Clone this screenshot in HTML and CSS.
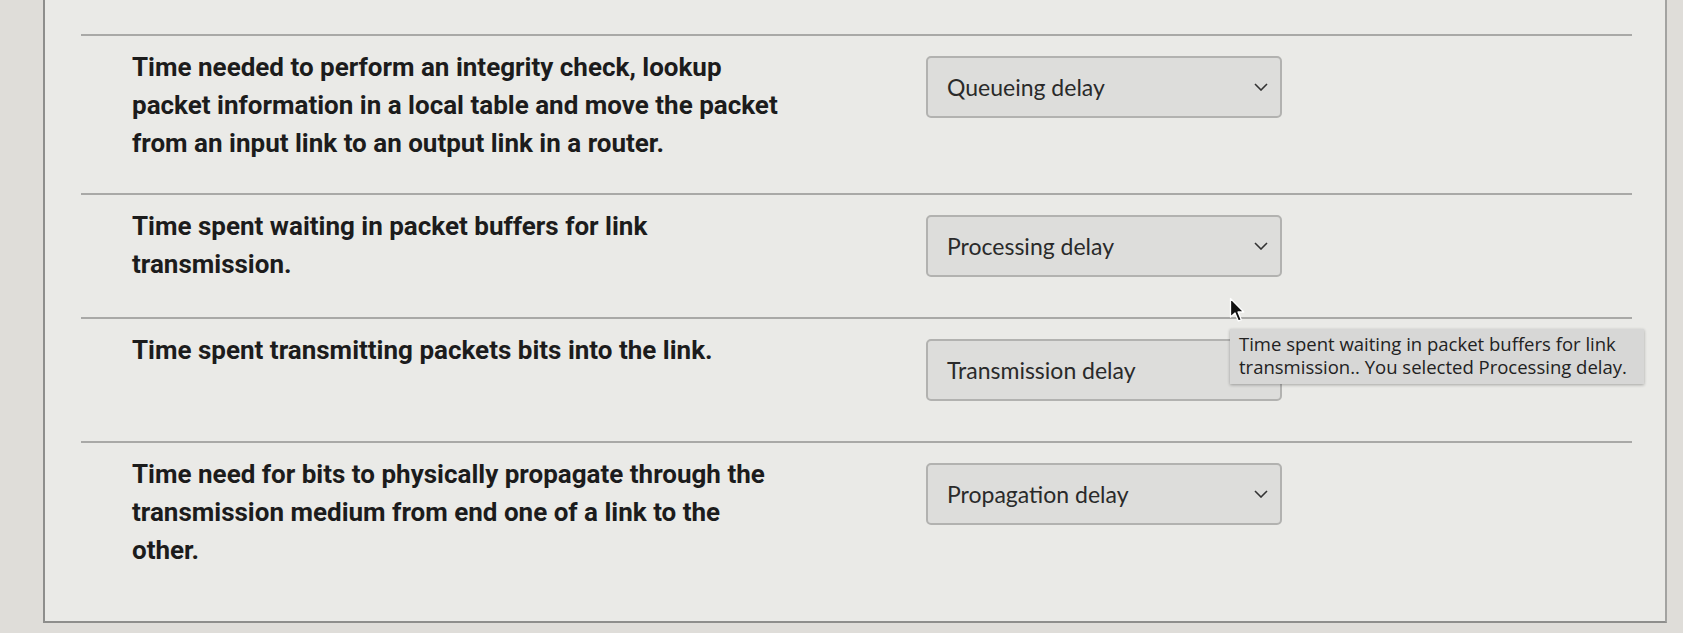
FILE: index.html
```html
<!DOCTYPE html>
<html lang="en">
<head>
<meta charset="utf-8">
<title>Matching question</title>
<link rel="stylesheet" href="styles.css">
</head>
<body>
<div class="panel">
  <div class="rows">
    <div class="row">
      <div class="question">Time needed to perform an integrity check, lookup packet information in a local table and move the packet from an input link to an output link in a router.</div>
      <div class="answer"><div class="select"><span>Queueing delay</span><svg class="chev" viewBox="0 0 14 8" width="14" height="8"><path d="M1 1 L7 7 L13 1" fill="none" stroke="#333" stroke-width="1.6"/></svg></div></div>
    </div>
    <div class="row">
      <div class="question">Time spent waiting in packet buffers for link transmission.</div>
      <div class="answer"><div class="select"><span>Processing delay</span><svg class="chev" viewBox="0 0 14 8" width="14" height="8"><path d="M1 1 L7 7 L13 1" fill="none" stroke="#333" stroke-width="1.6"/></svg></div></div>
    </div>
    <div class="row">
      <div class="question">Time spent transmitting packets bits into the link.</div>
      <div class="answer">
        <div class="select"><span>Transmission delay</span><svg class="chev" viewBox="0 0 14 8" width="14" height="8"><path d="M1 1 L7 7 L13 1" fill="none" stroke="#333" stroke-width="1.6"/></svg></div>
        <div class="tooltip">Time spent waiting in packet buffers for link<br>transmission.. You selected Processing delay.</div>
        <svg class="cursor" viewBox="0 0 16 26" width="16" height="26"><path d="M1.5 1.5 L1.5 20 L6 16 L9.3 24 L12.3 22.8 L9 15 L14.8 15 Z" fill="#111" stroke="#fff" stroke-width="1.3" stroke-linejoin="round"/></svg>
      </div>
    </div>
    <div class="row">
      <div class="question">Time need for bits to physically propagate through the transmission medium from end one of a link to the other.</div>
      <div class="answer"><div class="select"><span>Propagation delay</span><svg class="chev" viewBox="0 0 14 8" width="14" height="8"><path d="M1 1 L7 7 L13 1" fill="none" stroke="#333" stroke-width="1.6"/></svg></div></div>
    </div>
  </div>
</div>
</body>
</html>
```

FILE: styles.css
```css
html, body {
  margin: 0;
  padding: 0;
}
body {
  background: #dfddd9;
  padding-left: 43px;
  height: 633px;
  overflow: hidden;
}
.panel {
  box-sizing: border-box;
  width: 1624px;
  height: 623px;
  background: #eaeae7;
  border-left: 2px solid #8e8e8c;
  border-right: 2px solid #a3a3a1;
  border-bottom: 2px solid #8e8e8c;
  padding-top: 34px;
  overflow: hidden;
}
.rows {
  margin: 0 33px 0 36px;
}
.row {
  display: grid;
  grid-template-columns: 652px 356px;
  column-gap: 142px;
  align-items: start;
  border-top: 2px solid #a9a9a7;
  padding: 12px 0 31px 51px;
}
.question {
  font-family: Roboto, "Liberation Sans", sans-serif;
  font-weight: 700;
  font-size: 26px;
  line-height: 38px;
  color: #1c1c1c;
}
.answer {
  position: relative;
  margin: 8px 0 9px;
}
.select {
  box-sizing: border-box;
  height: 62px;
  display: flex;
  align-items: center;
  justify-content: space-between;
  padding: 0 12px 0 19px;
  background: #dddddb;
  border: 2px solid #b2b2b0;
  border-radius: 5px;
  font-family: Lato, "Open Sans", sans-serif;
  font-size: 23px;
  color: #2a2a2a;
}
.chev {
  display: block;
}
.tooltip {
  position: absolute;
  left: 304px;
  top: -10px;
  box-sizing: border-box;
  width: 414px;
  height: 55px;
  padding: 3px 0 0 9px;
  background: #d7d7d6;
  box-shadow: 0 1px 3px rgba(0,0,0,0.3);
  font-family: "Open Sans", "DejaVu Sans", sans-serif;
  font-size: 18.5px;
  line-height: 23px;
  color: #222;
  white-space: nowrap;
}
.cursor {
  position: absolute;
  left: 303px;
  top: -42px;
}
```
